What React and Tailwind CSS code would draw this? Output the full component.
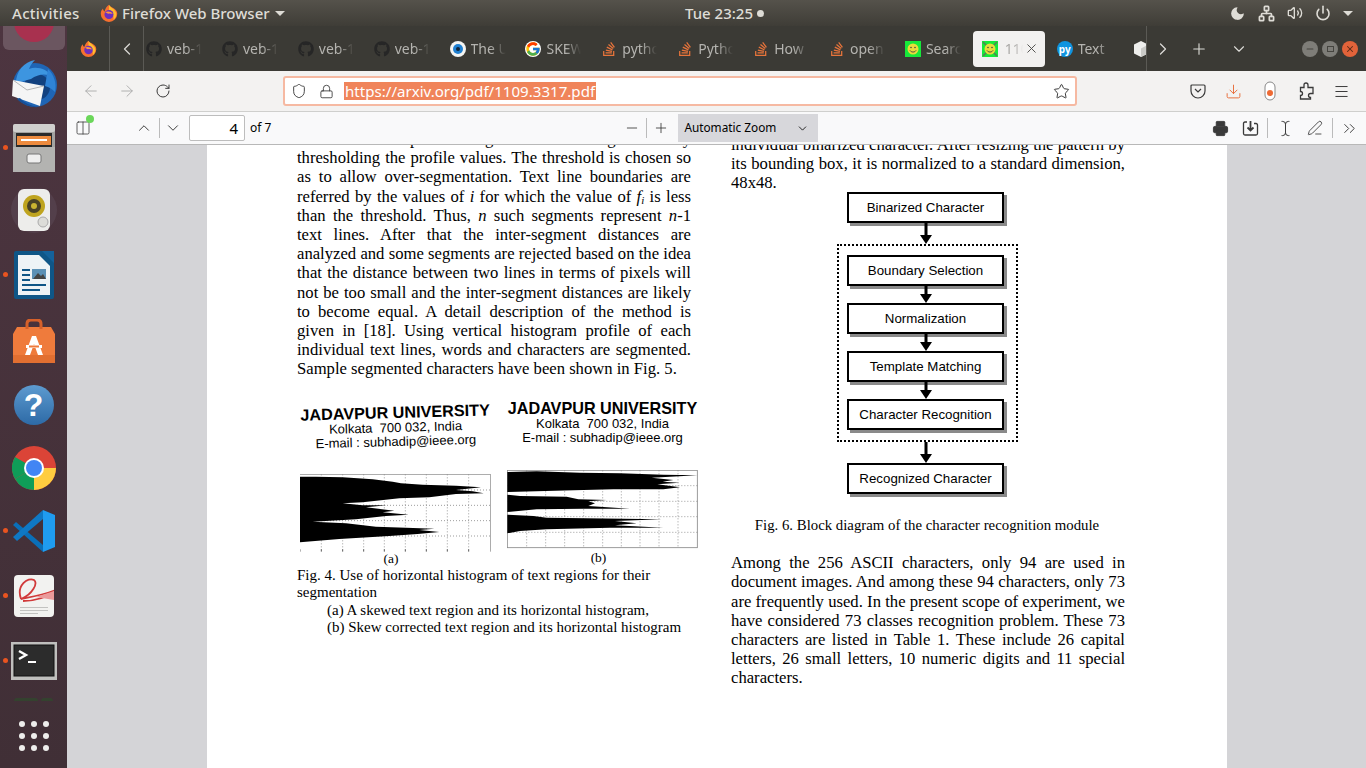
import React from "react";
import {
  ArrowLeft,
  ArrowRight,
  RotateCw,
  Shield,
  Lock,
  Star,
  Download,
  Menu,
  Minus,
  Plus,
  ChevronUp,
  ChevronDown,
  ChevronLeft,
  ChevronRight,
  ChevronsRight,
  Printer,
  X,
  Moon,
  Volume2,
  Power,
  Network,
  PenLine,
  TextCursor,
  Columns2,
} from "lucide-react";
import { FaGithub, FaStackOverflow } from "react-icons/fa";
import { FcGoogle } from "react-icons/fc";

const FirefoxIcon = ({ size = 18 }) => (
  <svg width={size} height={size} viewBox="0 0 24 24">
    <path d="M12 1c1 2 3 3 5 4 4 2 6 5 6 8a11 11 0 1 1-22 0c0-3 1-5 3-7 0 2 1 3 2 4 1-4 3-7 6-9z" fill="#f7702f" />
    <path d="M12 1c1 3 5 4 8 8 3 4 2 9-2 12 1-5-2-10-6-13z" fill="#ffbd2e" />
    <circle cx="12" cy="14" r="6" fill="#6d2fbf" />
    <path d="M7 11c3-2 8-1 10 2-2 0-4-1-6 0z" fill="#ff9a3d" />
  </svg>
);

const Smiley = ({ cross }) => (
  <svg width="16" height="16" viewBox="0 0 16 16">
    <rect width="16" height="16" fill="#16e93a" />
    {cross && <path d="M1 1l14 14M15 1L1 15" stroke="#5d7a55" strokeWidth="1.5" />}
    <circle cx="8" cy="8" r="5.5" fill="#e8dc3c" />
    <circle cx="6" cy="6.5" r="0.8" fill="#444" />
    <circle cx="10" cy="6.5" r="0.8" fill="#444" />
    <path d="M5 9.5c1.5 2 4.5 2 6 0" stroke="#444" fill="none" />
  </svg>
);

const PyIcon = () => (
  <div className="w-4 h-4 rounded-full bg-[#0f94e0] flex items-center justify-center text-white text-[10px] font-bold leading-none">
    py
  </div>
);

const CubeIcon = () => (
  <svg width="16" height="16" viewBox="0 0 16 16">
    <path d="M8 0l7 3.5v9L8 16l-7-3.5v-9z" fill="#eeeeec" />
    <path d="M8 7.5V16l7-3.5v-9z" fill="#c9c9c6" />
  </svg>
);

const tabs = [
  { icon: <FaGithub className="text-[#262626]" size={16} />, label: "veb-1" },
  { icon: <FaGithub className="text-[#262626]" size={16} />, label: "veb-1" },
  { icon: <FaGithub className="text-[#262626]" size={16} />, label: "veb-1" },
  { icon: <FaGithub className="text-[#262626]" size={16} />, label: "veb-1" },
  {
    icon: (
      <svg width="16" height="16" viewBox="0 0 16 16">
        <circle cx="8" cy="8" r="8" fill="#f4f4f2" />
        <circle cx="8" cy="8" r="5" fill="#1f7fd0" />
        <circle cx="8" cy="8" r="2" fill="#10243a" />
      </svg>
    ),
    label: "The U",
  },
  { icon: <FcGoogle size={16} className="bg-white rounded-full" />, label: "SKEW" },
  { icon: <FaStackOverflow className="text-[#e8743b]" size={16} />, label: "pytho" },
  { icon: <FaStackOverflow className="text-[#e8743b]" size={16} />, label: "Pytho" },
  { icon: <FaStackOverflow className="text-[#e8743b]" size={16} />, label: "How" },
  { icon: <FaStackOverflow className="text-[#e8743b]" size={16} />, label: "open" },
  { icon: <Smiley />, label: "Searc" },
  { icon: <Smiley cross />, label: "110", active: true },
  { icon: <PyIcon />, label: "Text" },
  { icon: <CubeIcon />, label: "" },
];

const ThunderbirdIcon = () => (
  <svg width="48" height="50" viewBox="0 0 48 50">
    <circle cx="25" cy="26" r="22" fill="#1f65b5" />
    <circle cx="27" cy="28" r="13" fill="#12417f" />
    <path d="M6 24C6 12 14 3 25 1c-3 3-5 6-6 9 8-3 18 0 24 8-7-4-15-3-22 2z" fill="#3d95e0" />
    <path d="M38 10c6 6 9 14 7 23-3-3-6-5-10-6z" fill="#2f83d6" />
    <path d="M3 21l31 6-4 20L2 37z" fill="#f5f5f5" />
    <path d="M3 21l14 10 17-4" stroke="#b5b5b5" fill="none" />
    <path d="M7 40c5 5 13 9 22 8-8-1-15-4-19-9z" fill="#174f96" />
  </svg>
);

const FilesIcon = () => (
  <svg width="42" height="48" viewBox="0 0 42 48">
    <rect x="0" y="0" width="42" height="48" rx="3" fill="#a3a3a1" />
    <rect x="0" y="0" width="42" height="8" rx="2" fill="#d0d0ce" />
    <rect x="3" y="9" width="36" height="14" fill="#2b2b2b" />
    <rect x="4" y="12" width="34" height="9" fill="#ed8b3f" />
    <rect x="8" y="15" width="26" height="2" fill="#fff" />
    <rect x="0" y="23" width="42" height="25" fill="#b3b3b1" />
    <rect x="14" y="30" width="14" height="9" rx="2" fill="#eeeeee" stroke="#777" />
  </svg>
);

const SpeakerIcon = () => (
  <svg width="50" height="46" viewBox="0 0 50 46">
    <circle cx="25" cy="22" r="23" fill="#5f4d5c" opacity="0.45" />
    <rect x="9" y="1" width="32" height="42" rx="6" fill="#ededeb" />
    <circle cx="25" cy="18" r="11" fill="#bfa41f" />
    <circle cx="25" cy="18" r="7" fill="#4a4326" />
    <circle cx="25" cy="18" r="3" fill="#c9b431" />
    <circle cx="34" cy="34" r="5" fill="#dcdcd8" stroke="#aaa" />
  </svg>
);

const WriterIcon = () => (
  <svg width="40" height="48" viewBox="0 0 40 48">
    <rect width="40" height="48" rx="2" fill="#0f5687" />
    <path d="M4 4h21l11 11v29H4z" fill="#eef3f6" />
    <path d="M28 0h12v12z" fill="#14629b" />
    <rect x="8" y="18" width="8" height="2" fill="#0f5687" />
    <rect x="8" y="23" width="8" height="2" fill="#0f5687" />
    <rect x="8" y="28" width="8" height="2" fill="#0f5687" />
    <rect x="18" y="18" width="14" height="10" fill="#5b90b5" />
    <path d="M19 28l5-6 3 3 2-2 3 5z" fill="#444" />
    <rect x="8" y="33" width="24" height="2" fill="#0f5687" />
    <rect x="8" y="38" width="18" height="2" fill="#0f5687" />
  </svg>
);

const BagIcon = () => (
  <svg width="42" height="44" viewBox="0 0 42 44">
    <path d="M4 8h34l4 7v29H0V15z" fill="#ef7b3c" />
    <path d="M0 36h42v8H0z" fill="#e26f31" />
    <path d="M14 10V5q0-4 4-4h6q4 0 4 4v5" fill="none" stroke="#d5602a" strokeWidth="3" />
    <path d="M19 17h4l7 19h-5l-4-11-4 11h-5z" fill="#fff" />
    <rect x="13" y="26" width="16" height="3" fill="#fff" />
    <rect x="16" y="26.5" width="10" height="2" fill="#ef7b3c" />
  </svg>
);

const HelpIcon = () => (
  <div className="w-10 h-10 rounded-full bg-gradient-to-b from-[#5d9bd0] to-[#2d6aa6] flex items-center justify-center text-white text-[32px] font-bold leading-none font-['Liberation_Sans',sans-serif]">
    ?
  </div>
);

const ChromeIcon = () => (
  <svg width="44" height="44" viewBox="0 0 44 44">
    <circle cx="22" cy="22" r="22" fill="#db4437" />
    <path d="M22 22L3 33a22 22 0 0 1 0-22z" fill="#0f9d58" />
    <path d="M22 22L3 33a22 22 0 0 0 19 11l10-22z" fill="#0f9d58" />
    <path d="M22 22h22a22 22 0 0 1-22 22z" fill="#ffcd40" />
    <circle cx="22" cy="22" r="10" fill="#fff" />
    <circle cx="22" cy="22" r="8" fill="#4285f4" />
  </svg>
);

const VsCodeIcon = () => (
  <svg width="42" height="42" viewBox="0 0 42 42">
    <path d="M0 15l3-3 27 23v7z" fill="#0a6fb8" />
    <path d="M30 0L0 27l4 4L30 9z" fill="#0f78c4" />
    <path d="M30 0l12 5v32l-12 5z" fill="#1f9cf0" />
  </svg>
);

const EvinceIcon = () => (
  <svg width="40" height="42" viewBox="0 0 40 42">
    <rect width="40" height="42" rx="4" fill="#f2f2f0" />
    <path d="M7 24C2 10 14 2 20 5c4 3-1 14-13 19 10-2 22-4 32-8-4 6-18 10-30 10" fill="none" stroke="#d13a3a" strokeWidth="1.8" />
    <path d="M22 22l18-6v9z" fill="#eb9a9a" />
    <rect x="6" y="32" width="28" height="1" fill="#c2c2c0" />
    <rect x="6" y="35" width="28" height="1" fill="#c2c2c0" />
    <rect x="6" y="38" width="18" height="1" fill="#c2c2c0" />
  </svg>
);

const TerminalIcon = () => (
  <svg width="46" height="38" viewBox="0 0 46 38">
    <rect width="46" height="38" fill="#bfbfbd" />
    <rect x="3" y="3" width="40" height="31" fill="#2c2c2c" stroke="#111" />
    <path d="M8 9l7 4-7 4" fill="none" stroke="#fff" strokeWidth="2.4" />
    <rect x="17" y="19" width="8" height="2" fill="#fff" />
  </svg>
);

const dockItems = [
  { h: "h-[67px]", icon: <ThunderbirdIcon /> },
  { h: "h-[62px]", icon: <FilesIcon />, dot: true },
  { h: "h-[63px]", icon: <SpeakerIcon /> },
  { h: "h-[66px]", icon: <WriterIcon />, dot: true },
  { h: "h-[65px]", icon: <BagIcon /> },
  { h: "h-[63px]", icon: <HelpIcon /> },
  { h: "h-[63px]", icon: <ChromeIcon /> },
  { h: "h-[64px]", icon: <VsCodeIcon />, dot: true },
  { h: "h-[65px]", icon: <EvinceIcon />, dot: true },
  { h: "h-[66px]", icon: <TerminalIcon />, dot: true },
];

const Dock = () => (
  <div className="w-[67px] shrink-0 bg-gradient-to-b from-[#4d3540] to-[#402f36] flex flex-col items-center overflow-hidden">
    <div className="w-[62px] h-[24px] rounded-b-md bg-[#6b5660] overflow-hidden flex justify-center">
      <div className="w-10 h-10 rounded-full bg-[#a8314f] -mt-[24px]" />
    </div>
    {dockItems.map((item, i) => (
      <div key={i} className={`${item.h} w-full relative flex items-center justify-center`}>
        {item.dot && <div className="absolute left-[2.5px] top-1/2 -mt-[3px] w-[5px] h-[5px] rounded-full bg-[#e95420]" />}
        {item.icon}
      </div>
    ))}
    <div className="h-[10px] w-[40px] flex gap-[3px] items-center opacity-70">
      <div className="w-[24px] h-[3px] rounded-t-full bg-[#2f4a2c]" />
      <div className="w-[12px] h-[3px] rounded-t-sm bg-[#2f4a2c]" />
    </div>
    <div className="grid grid-cols-3 gap-x-[6px] gap-y-[6px] mt-[17px]">
      {Array.from({ length: 9 }).map((_, i) => (
        <div key={i} className="w-[6px] h-[6px] rounded-full bg-[#eeeeec]" />
      ))}
    </div>
  </div>
);

const TopBar = () => (
  <div className="h-[26px] shrink-0 bg-gradient-to-b from-[#55524b] to-[#3f3d37] flex items-center text-[#dedcd6] text-[15px] font-medium font-['Noto_Sans',sans-serif] relative">
    <span className="ml-[12px] w-[68px] tracking-[0.3px]">Activities</span>
    <span className="ml-[20px] flex items-center gap-[4px]">
      <FirefoxIcon size={18} />
      Firefox Web Browser
      <span className="ml-[1px] w-0 h-0 border-x-[5px] border-x-transparent border-t-[5px] border-t-[#dedcd6]" />
    </span>
    <span className="absolute left-[685px] flex items-center gap-[4px]">
      Tue 23:25
      <span className="w-[7px] h-[7px] rounded-full bg-[#dedcd6]" />
    </span>
    <div className="ml-auto mr-[13px] flex items-center gap-[12px]">
      <Moon size={17} fill="#dedcd6" strokeWidth={0} />
      <Network size={17} strokeWidth={2.4} />
      <Volume2 size={16} />
      <Power size={16} strokeWidth={2.4} />
      <span className="w-0 h-0 border-x-[5px] border-x-transparent border-t-[5px] border-t-[#dedcd6]" />
    </div>
  </div>
);

const TabBar = () => (
  <div className="h-[45px] shrink-0 bg-[#3b3a35] flex items-stretch font-['Noto_Sans',sans-serif] text-[14px]">
    <div className="w-[43px] flex items-center justify-center border-r border-[#5b5a55]">
      <FirefoxIcon size={17} />
    </div>
    <div className="w-[34px] flex items-center justify-center border-r border-[#5b5a55] text-[#d8d7d3]">
      <ChevronLeft size={20} strokeWidth={1.5} />
    </div>
    <div className="w-[1003px] flex items-center border-r border-[#5b5a55] overflow-hidden">
      {tabs.map((t, i) => (
        <div key={i} className="w-[75.9px] h-[36px] flex items-center shrink-0">
          {t.active ? (
            <div className="-ml-[6px] w-[72px] h-[36px] rounded-[4px] bg-[#f2f1f0] flex items-center pl-[9px] shrink-0">
              {t.icon}
              <span className="ml-[7px] w-[18px] overflow-hidden text-[#a9a8a6] [mask-image:linear-gradient(to_right,black_50%,transparent)]">{t.label}</span>
              <X size={15} strokeWidth={1.5} className="ml-[1px] text-[#4a4a48]" />
            </div>
          ) : (
            <div className="flex items-center pl-[2px]">
              <span className="shrink-0">{t.icon}</span>
              <span className="ml-[5px] w-[35px] overflow-hidden whitespace-nowrap text-[#b5b4b0] [mask-image:linear-gradient(to_right,black_55%,transparent)]">{t.label}</span>
            </div>
          )}
        </div>
      ))}
    </div>
    <div className="flex items-center text-[#dcdbd7] flex-1">
      <ChevronRight size={20} strokeWidth={1.5} className="ml-[6px]" />
      <Plus size={18} strokeWidth={1.5} className="ml-[17px]" />
      <ChevronDown size={18} strokeWidth={1.5} className="ml-[22px]" />
      <div className="ml-[54px] flex items-center gap-[4px]">
        <div className="w-4 h-4 rounded-full bg-[#7e7d78] flex items-center justify-center text-[#45443f]">
          <Minus size={10} strokeWidth={2.5} />
        </div>
        <div className="w-4 h-4 rounded-full bg-[#7e7d78] flex items-center justify-center">
          <div className="w-[7px] h-[6px] border border-[#45443f]" />
        </div>
        <div className="w-4 h-4 rounded-full bg-[#e2633a] flex items-center justify-center text-[#5b2a18]">
          <X size={10} strokeWidth={2.5} />
        </div>
      </div>
    </div>
  </div>
);

const NavBar = () => (
  <div className="h-[41px] shrink-0 bg-[#f3f2f1] border-b border-[#cfcfcd] flex items-center text-[#3a3a3a] font-['Noto_Sans',sans-serif]">
    <ArrowLeft size={18} strokeWidth={1.2} className="ml-[15px] text-[#a9a9a9]" />
    <ArrowRight size={18} strokeWidth={1.2} className="ml-[18px] text-[#a9a9a9]" />
    <RotateCw size={16} strokeWidth={1.5} className="ml-[19px]" />
    <div className="ml-[112px] w-[794px] h-[30px] bg-white rounded-[3px] border-2 border-[#f6b9a2] flex items-center">
      <Shield size={16} strokeWidth={1.4} className="ml-[6px]" />
      <Lock size={15} strokeWidth={1.4} className="ml-[12px]" />
      <span className="ml-[10px] bg-[#f0845a] text-white text-[15.1px] leading-[18px] px-px">https://arxiv.org/pdf/1109.3317.pdf</span>
      <Star size={17} strokeWidth={1.4} className="ml-auto mr-[5px]" />
    </div>
    <svg width="16" height="16" viewBox="0 0 16 16" className="ml-[113px]" fill="none" stroke="currentColor" strokeWidth="1.2">
      <path d="M2 2h12q1 0 1 1v5a7 7 0 0 1-14 0V3q0-1 1-1z" />
      <path d="M5 6l3 3 3-3" />
    </svg>
    <Download size={17} strokeWidth={1.4} className="ml-[19px] text-[#e8703f]" />
    <svg width="12" height="20" viewBox="0 0 12 20" className="ml-[22px]">
      <rect x="1" y="1" width="10" height="18" rx="5" fill="#fff" stroke="#888" />
      <circle cx="6" cy="12" r="3" fill="#ee6a34" />
    </svg>
    <svg width="16" height="18" viewBox="0 0 16 18" className="ml-[23px]" fill="none" stroke="currentColor" strokeWidth="1.3">
      <path d="M1.5 5.5h3.5V3q0-2 2-2t2 2v2.5h5v6h-2.5q-2 0-2 2t2 2v1.500h-10v-3.500q2 0 2-2t-2-2z" />
    </svg>
    <Menu size={17} strokeWidth={1.4} className="ml-[18px]" />
  </div>
);

const PdfToolbar = () => (
  <div className="h-[33px] shrink-0 bg-[#f9f9fa] border-b border-[#b8b8b8] flex items-center text-[#3a3a3a] font-['Noto_Sans',sans-serif] text-[11.8px]">
    <div className="ml-[8px] relative">
      <Columns2 size={16} strokeWidth={1.2} />
      <div className="absolute -right-[3px] -top-[5px] w-[8px] h-[8px] rounded-full bg-[#6bd75a]" />
    </div>
    <ChevronUp size={18} strokeWidth={1.3} className="ml-[44px]" />
    <div className="ml-[6px] w-px h-[20px] bg-[#bbb]" />
    <ChevronDown size={18} strokeWidth={1.3} className="ml-[4px]" />
    <div className="ml-[7px] w-[56px] h-[26px] bg-white border border-[#bdbdbd] rounded-[2px] flex items-center justify-end pr-[6px] text-[15px] text-black">4</div>
    <span className="ml-[5px] text-black text-[12px]">of 7</span>
    <Minus size={16} strokeWidth={1.3} className="ml-[353px]" />
    <div className="ml-[6px] w-px h-[20px] bg-[#bbb]" />
    <Plus size={16} strokeWidth={1.3} className="ml-[6px]" />
    <div className="ml-[9px] w-[140px] h-[28px] bg-[#d7d7db] flex items-center pl-[6px] text-black">
      Automatic Zoom
      <ChevronDown size={13} strokeWidth={1.5} className="ml-auto mr-[9px]" />
    </div>
    <Printer size={17} fill="#3a3a3a" stroke="#3a3a3a" strokeWidth={1.3} className="ml-[394px]" />
    <svg width="17" height="17" viewBox="0 0 17 17" className="ml-[13px]" fill="none" stroke="currentColor" strokeWidth="1.3">
      <path d="M5 2H3q-1.500 0-1.500 1.500v10Q1.500 15 3 15h11q1.500 0 1.500-1.500V5q0-1.500-1.500-1.500h-2" />
      <path d="M8.500 1v9M5.500 7.500l3 3 3-3" strokeWidth="1.800" />
    </svg>
    <div className="ml-[8px] w-px h-[20px] bg-[#bbb]" />
    <TextCursor size={17} strokeWidth={1.4} className="ml-[9px]" />
    <PenLine size={16} strokeWidth={1.3} className="ml-[13px]" />
    <div className="ml-[9px] w-px h-[20px] bg-[#bbb]" />
    <ChevronsRight size={19} strokeWidth={1.2} className="ml-[7px]" />
  </div>
);

// one justified line of the pdf body
const Line = ({ children, last }) => (
  <div className={last ? "whitespace-nowrap" : "[text-align:justify] [text-align-last:justify] whitespace-nowrap"}>{children}</div>
);

const HistLeft = () => (
  <svg width="191" height="78" viewBox="12 12 573 234" className="shrink-0">
    <g stroke="#888" strokeWidth="2.5" strokeDasharray="3 6">
      <path d="M12 60H584M12 106H584M12 152H584M12 198H584M76 13V245M140 13V245M203 13V245M265 13V245M328 13V245M391 13V245M454 13V245M518 13V245" />
    </g>
    <path d="M12 13H584V245" fill="none" stroke="#888" strokeWidth="2.500" />
    <path d="M12 20L60 20L140 22L230 28L290 35L315 40L380 44L480 47L555 52L480 60L530 64L563 70L480 72L400 82L310 85L200 97L140 100L200 106L272 106L210 112L295 122L260 127L338 134L270 138L180 148L50 155L150 160L240 170L330 173L415 176L370 180L430 186L365 192L280 198L130 207L12 217Z" fill="#000" />
    <path d="M12 238V245M76 238V245M140 238V245M203 238V245M265 238V245M328 238V245M391 238V245M454 238V245M518 238V245" stroke="#444" strokeWidth="2.500" />
  </svg>
);

const HistRight = () => (
  <svg width="191" height="79" viewBox="11 12 573 237" className="shrink-0">
    <rect x="12" y="13" width="570" height="232" fill="#fff" stroke="#888" strokeWidth="2.500" />
    <g stroke="#888" strokeWidth="2.500" strokeDasharray="3 6">
      <path d="M12 59H582M12 106H582M12 152H582M12 199H582M70 13V245M127 13V245M184 13V245M241 13V245M298 13V245M354 13V245M410 13V245M467 13V245M524 13V245" />
    </g>
    <path d="M12 18L100 16L230 20L350 22L480 26L582 28L500 32L445 35L510 42L478 47L528 50L462 55L530 64L480 70L330 70L240 72L12 78Z" fill="#000" />
    <path d="M12 86L50 90L190 92L225 100L310 102L255 106L275 112L255 120L380 128L240 128L100 130L12 138Z" fill="#000" />
    <path d="M12 146L90 150L130 155L475 160L335 165L400 172L335 178L480 185L320 185L130 190L50 195L12 202Z" fill="#000" />
  </svg>
);

const Letterhead = ({ mail, skew }) => (
  <div className={`font-['Liberation_Sans',sans-serif] text-center text-black w-[191px] ${skew ? "-rotate-[1.6deg]" : ""}`}>
    <div className="text-[16.2px] font-bold leading-[17px] whitespace-nowrap">JADAVPUR UNIVERSITY</div>
    <div className="text-[13px] leading-[14px]">Kolkata&nbsp; 700 032, India</div>
    <div className="text-[13px] leading-[14px]">{mail}</div>
  </div>
);

const Arrow = ({ h }) => (
  <svg width="12" height={h} viewBox={`0 0 12 ${h}`} className="block -ml-[3px]">
    <rect x="4.5" y="0" width="3" height={h - 6} fill="#000" />
    <path d={`M0 ${h - 9}H12L6 ${h}Z`} fill="#000" />
  </svg>
);

const Box = ({ children }) => (
  <div className="w-[157px] h-[31px] -ml-[4px] border-2 border-black bg-white shadow-[3px_3px_0_#8a8a8a] flex items-center justify-center font-['Liberation_Sans',sans-serif] text-[13.3px] text-black leading-none pt-[2px]">
    {children}
  </div>
);

const BlockDiagram = () => (
  <div className="flex flex-col items-center w-[181px] ml-[106px] -mt-[1px]">
    <Box>Binarized Character</Box>
    <Arrow h={21} />
    <div className="w-[181px] h-[198px] border-2 border-dotted border-black flex flex-col items-center pt-[9px]">
      <Box>Boundary Selection</Box>
      <Arrow h={17} />
      <Box>Normalization</Box>
      <Arrow h={17} />
      <Box>Template Matching</Box>
      <Arrow h={17} />
      <Box>Character Recognition</Box>
    </div>
    <Arrow h={21} />
    <Box>Recognized Character</Box>
  </div>
);

const PdfPage = () => (
  <div className="w-[1020px] h-[640px] ml-[140px] bg-white flex pl-[90px] gap-[40px] font-['Liberation_Serif',serif] text-[16.65px] leading-[19.2px] text-black">
    {/* left column */}
    <div className="w-[394px] -mt-[16px] shrink-0">
      <Line>The horizontal profile is generated and segmented by</Line>
      <Line>thresholding the profile values. The threshold is chosen so</Line>
      <Line>as to allow over-segmentation. Text line boundaries are</Line>
      <Line>
        referred by the values of <i>i</i> for which the value of <i>f<sub className="text-[11px]">i</sub></i> is less
      </Line>
      <Line>
        than the threshold. Thus, <i>n</i> such segments represent <i>n</i>-1
      </Line>
      <Line>text lines. After that the inter-segment distances are</Line>
      <Line>analyzed and some segments are rejected based on the idea</Line>
      <Line>that the distance between two lines in terms of pixels will</Line>
      <Line>not be too small and the inter-segment distances are likely</Line>
      <Line>to become equal. A detail description of the method is</Line>
      <Line>given in [18]. Using vertical histogram profile of each</Line>
      <Line>individual text lines, words and characters are segmented.</Line>
      <Line last>Sample segmented characters have been shown in Fig. 5.</Line>

      <div className="flex ml-[3px] gap-[16px] mt-[21px]">
        <div className="w-[191px] flex flex-col items-center">
          <div className="h-[74px] pt-[4px]">
            <Letterhead skew mail="E-mail : subhadip@ieee.org" />
          </div>
          <HistLeft />
          <div className="text-[13.5px] leading-[14px] -ml-[9px]">(a)</div>
        </div>
        <div className="w-[191px] flex flex-col items-center">
          <div className="h-[70px]">
            <Letterhead mail="E-mail : subhadip@ieee.org" />
          </div>
          <HistRight />
          <div className="text-[13.5px] leading-[14px] -ml-[8px] mt-[2px]">(b)</div>
        </div>
      </div>
      <div className="text-[15px] leading-[17.5px] mt-[1px]">
        <div>Fig. 4. Use of horizontal histogram of text regions for their</div>
        <div>segmentation</div>
        <div className="pl-[30px]">(a) A skewed text region and its horizontal histogram,</div>
        <div className="pl-[30px]">(b) Skew corrected text region and its horizontal histogram</div>
      </div>
    </div>

    {/* right column */}
    <div className="w-[394px] -mt-[10px] shrink-0">
      <Line>individual binarized character. After resizing the pattern by</Line>
      <Line>its bounding box, it is normalized to a standard dimension,</Line>
      <Line last>48x48.</Line>
      <BlockDiagram />
      <div className="text-[14.8px] leading-[17.5px] text-center mt-[23px] -ml-[2px]">Fig. 6. Block diagram of the character recognition module</div>
      <div className="mt-[19px]">
        <Line>Among the 256 ASCII characters, only 94 are used in</Line>
        <Line>document images. And among these 94 characters, only 73</Line>
        <Line>are frequently used. In the present scope of experiment, we</Line>
        <Line>have considered 73 classes recognition problem. These 73</Line>
        <Line>characters are listed in Table 1. These include 26 capital</Line>
        <Line>letters, 26 small letters, 10 numeric digits and 11 special</Line>
        <Line last>characters.</Line>
      </div>
    </div>
  </div>
);

export default function App() {
  return (
    <div className="w-[1366px] h-[768px] overflow-hidden flex flex-col">
      <TopBar />
      <div className="flex flex-1 min-h-0">
        <Dock />
        <div className="flex-1 flex flex-col min-w-0">
          <TabBar />
          <NavBar />
          <PdfToolbar />
          <div className="flex-1 bg-[#d4d4d7] overflow-hidden">
            <PdfPage />
          </div>
        </div>
      </div>
    </div>
  );
}
